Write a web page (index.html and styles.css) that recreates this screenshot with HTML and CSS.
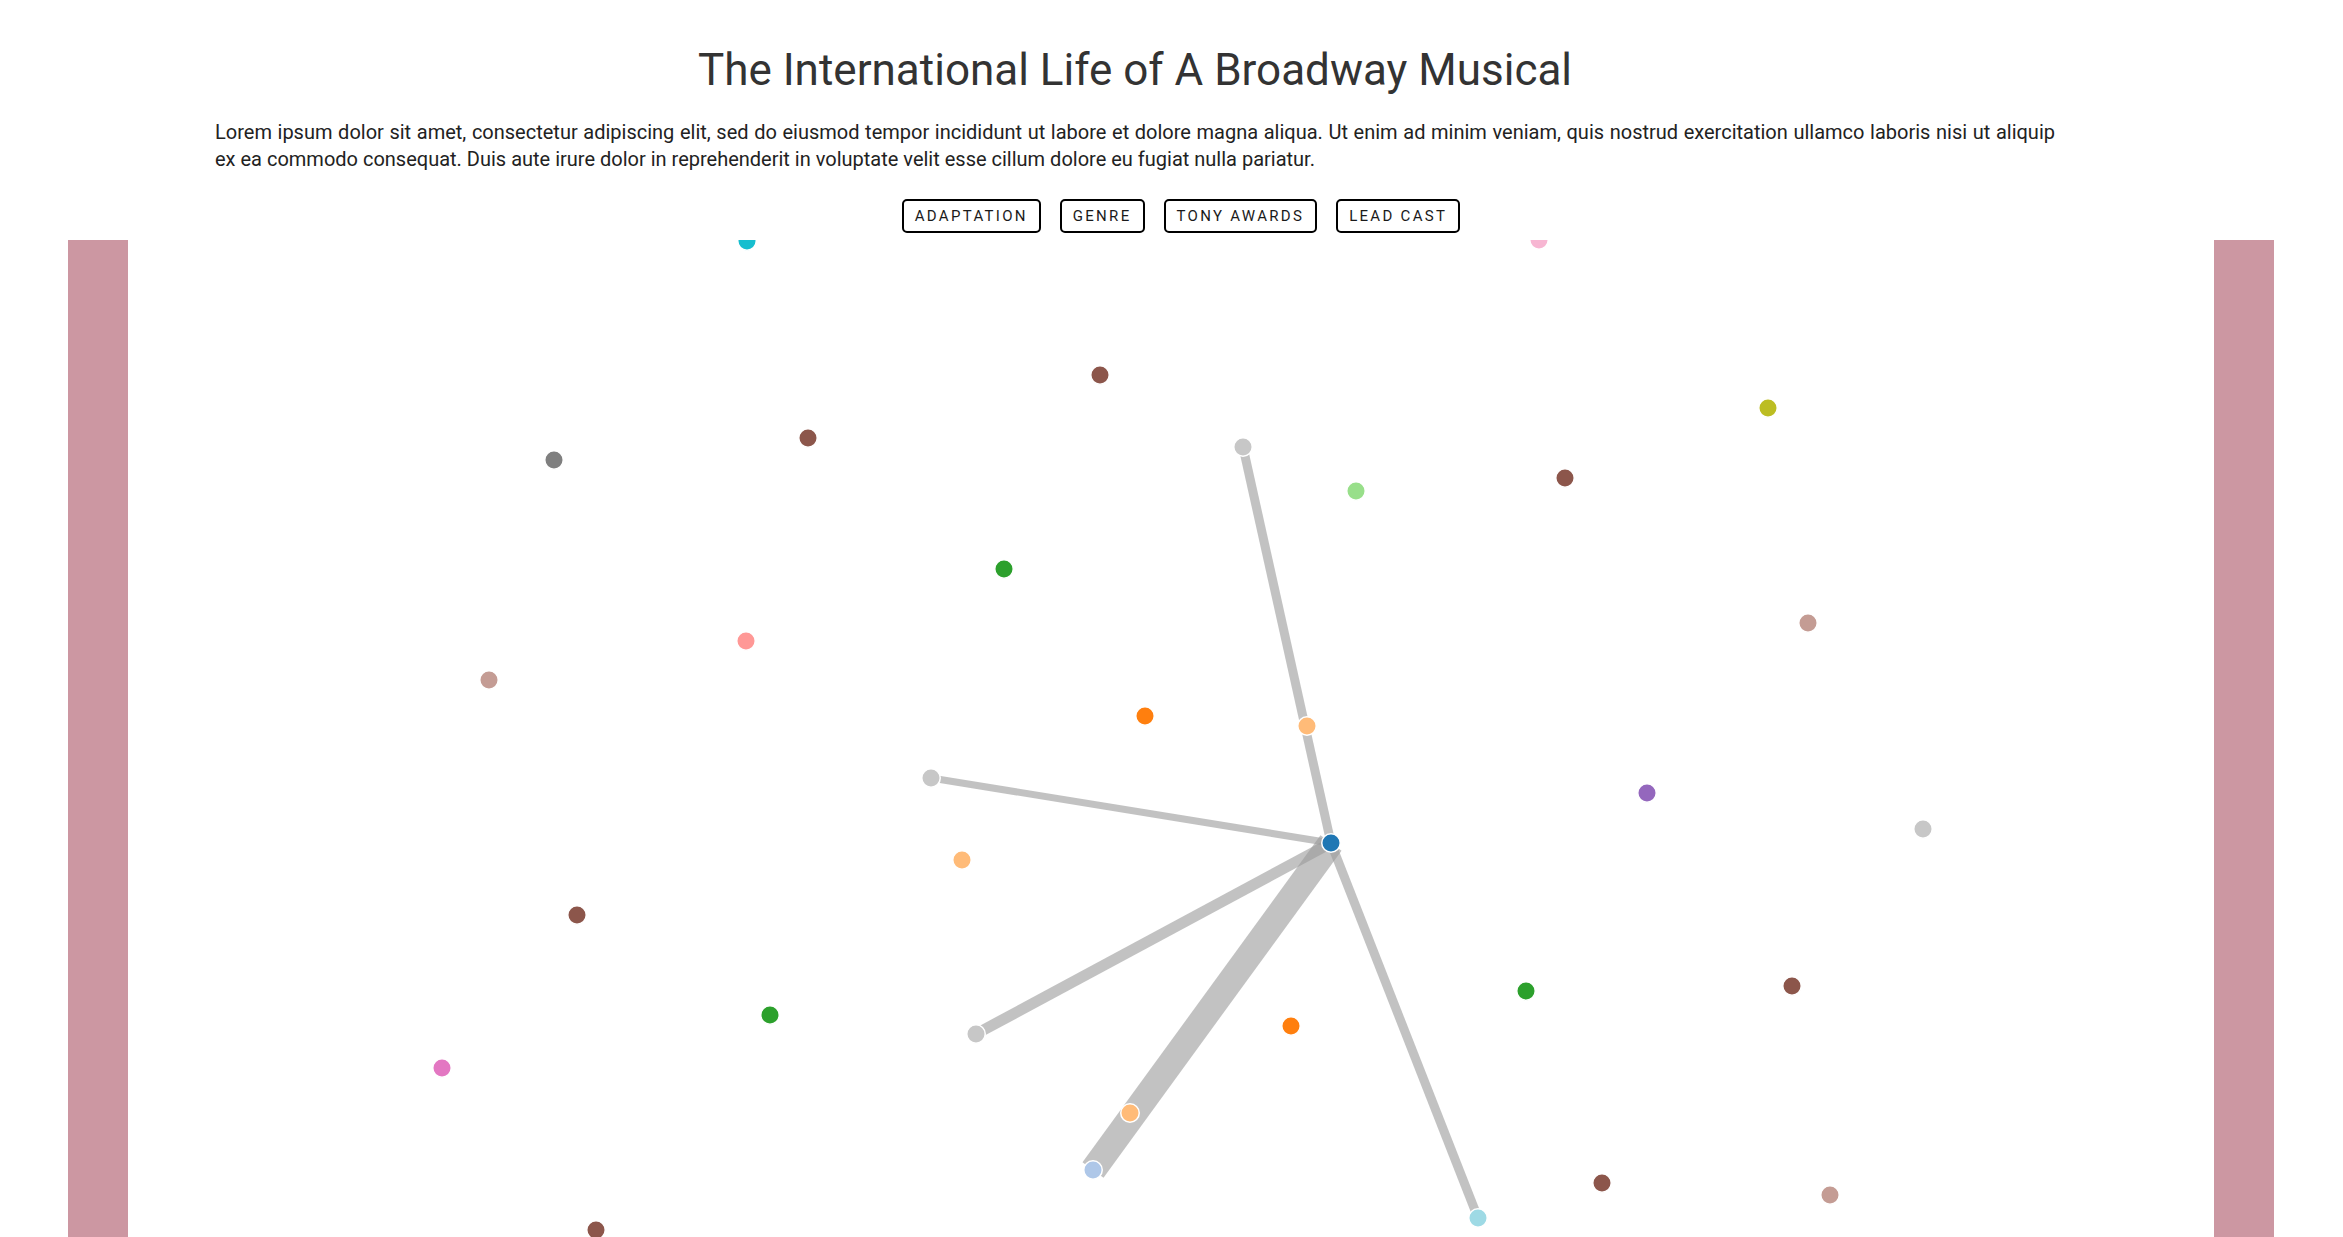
FILE: index.html
```html
<!DOCTYPE html>
<html>
<head>
<meta charset="utf-8">
<title>The International Life of A Broadway Musical</title>
<link rel="stylesheet" href="styles.css">
</head>
<body>
<header class="intro">
  <h1 class="title">The International Life of A Broadway Musical</h1>
  <p class="lede">Lorem ipsum dolor sit amet, consectetur adipiscing elit, sed do eiusmod tempor incididunt ut labore et dolore magna aliqua. Ut enim ad minim veniam, quis nostrud exercitation ullamco laboris nisi ut aliquip ex ea commodo consequat. Duis aute irure dolor in reprehenderit in voluptate velit esse cillum dolore eu fugiat nulla pariatur.</p>
</header>
<nav class="filters">
  <button class="filter">Adaptation</button><button class="filter">Genre</button><button class="filter">Tony Awards</button><button class="filter">Lead Cast</button>
</nav>
<main class="stage">
  <div class="curtain"></div>
  <svg class="graph" viewBox="0 0 2086 997" width="2086" height="997">
    <g class="links">
      <line x1="1203" y1="603" x2="1115" y2="207" stroke-width="9"/>
      <line x1="1203" y1="603" x2="803" y2="538" stroke-width="7"/>
      <line x1="1203" y1="603" x2="848" y2="794" stroke-width="11"/>
      <line x1="1203" y1="603" x2="965" y2="930" stroke-width="26"/>
      <line x1="1203" y1="603" x2="1350" y2="978" stroke-width="9"/>
    </g>
    <g class="nodes">
      <circle cx="619" cy="1" fill="#17becf"/>
      <circle cx="1411" cy="0" fill="#f7b6d2"/>
      <circle cx="972" cy="135" fill="#8c564b"/>
      <circle cx="680" cy="198" fill="#8c564b"/>
      <circle cx="426" cy="220" fill="#7f7f7f"/>
      <circle cx="1640" cy="168" fill="#bcbd22"/>
      <circle cx="1437" cy="238" fill="#8c564b"/>
      <circle cx="1228" cy="251" fill="#98df8a"/>
      <circle cx="1115" cy="207" fill="#c7c7c7"/>
      <circle cx="876" cy="329" fill="#2ca02c"/>
      <circle cx="618" cy="401" fill="#ff9896"/>
      <circle cx="361" cy="440" fill="#c49c94"/>
      <circle cx="1680" cy="383" fill="#c49c94"/>
      <circle cx="1017" cy="476" fill="#ff7f0e"/>
      <circle cx="1179" cy="486" fill="#ffbb78"/>
      <circle cx="803" cy="538" fill="#c7c7c7"/>
      <circle cx="1519" cy="553" fill="#9467bd"/>
      <circle cx="1795" cy="589" fill="#c7c7c7"/>
      <circle cx="834" cy="620" fill="#ffbb78"/>
      <circle cx="449" cy="675" fill="#8c564b"/>
      <circle cx="1398" cy="751" fill="#2ca02c"/>
      <circle cx="1664" cy="746" fill="#8c564b"/>
      <circle cx="642" cy="775" fill="#2ca02c"/>
      <circle cx="848" cy="794" fill="#c7c7c7"/>
      <circle cx="1163" cy="786" fill="#ff7f0e"/>
      <circle cx="314" cy="828" fill="#e377c2"/>
      <circle cx="1002" cy="873" fill="#ffbb78"/>
      <circle cx="965" cy="930" fill="#aec7e8"/>
      <circle cx="1350" cy="978" fill="#9edae5"/>
      <circle cx="1474" cy="943" fill="#8c564b"/>
      <circle cx="1702" cy="955" fill="#c49c94"/>
      <circle cx="468" cy="990" fill="#8c564b"/>
      <circle cx="1203" cy="603" fill="#1f77b4"/>
    </g>
  </svg>
  <div class="curtain"></div>
</main>
</body>
</html>
```

FILE: styles.css
```css
html, body {
  margin: 0;
  padding: 0;
  background: #fff;
  overflow: hidden;
}

body {
  font-family: Roboto, "Liberation Sans", sans-serif;
  color: #222;
}

.intro {
  width: 1840px;
  margin-left: 215px;
  padding-top: 44px;
}

.title {
  margin: 0;
  font-size: 44px;
  line-height: 52px;
  font-weight: 400;
  text-align: center;
  color: #333;
}

.lede {
  margin: 23px 0 0 0;
  font-size: 20px;
  line-height: 27px;
  text-align: justify;
  color: #222;
}

.filters {
  display: flex;
  justify-content: center;
  align-items: flex-start;
  margin-top: 26px;
  height: 41px;
}

.filter {
  margin-left: 19px;
  height: 34px;
  padding: 0 11px;
  border: 2px solid #000;
  border-radius: 5px;
  background: #fff;
  font-family: Roboto, "Liberation Sans", sans-serif;
  font-size: 15px;
  letter-spacing: 2.3px;
  text-transform: uppercase;
  color: #1a1a1a;
}

.stage {
  display: flex;
  padding: 0 68px;
  height: 997px;
}

.curtain {
  width: 60px;
  flex: none;
  background: #cc97a2;
}

.graph {
  flex: none;
  display: block;
  overflow: hidden;
}

.links line {
  stroke: #999;
  stroke-opacity: 0.6;
}

.nodes circle {
  r: 9.25px;
  stroke: #fff;
  stroke-width: 1.5;
}
```
